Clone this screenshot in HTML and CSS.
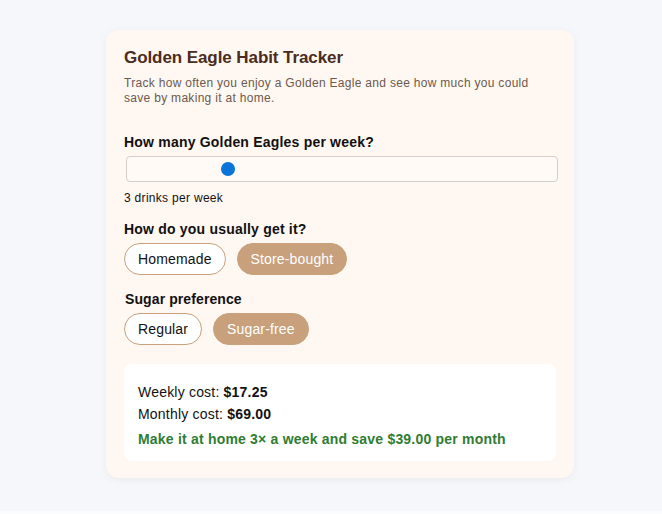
FILE: index.html
```html
<!DOCTYPE html>
<html lang="en">
<head>
<meta charset="utf-8">
<title>Golden Eagle Habit Tracker</title>
<link rel="stylesheet" href="styles.css">
</head>
<body>
<main class="card">
  <h2 class="title">Golden Eagle Habit Tracker</h2>
  <p class="subtitle">Track how often you enjoy a Golden Eagle and see how much you could save by making it at home.</p>

  <section class="field">
    <label class="label" for="freq">How many Golden Eagles per week?</label>
    <input id="freq" class="slider" type="range" min="1" max="10" value="3">
    <div class="hint">3 drinks per week</div>
  </section>

  <section class="field">
    <div class="label">How do you usually get it?</div>
    <div class="options">
      <button class="pill">Homemade</button>
      <button class="pill active">Store-bought</button>
    </div>
  </section>

  <section class="field sugar">
    <div class="label small">Sugar preference</div>
    <div class="options">
      <button class="pill">Regular</button>
      <button class="pill active">Sugar-free</button>
    </div>
  </section>

  <section class="results">
    <p class="line">Weekly cost: <strong>$17.25</strong></p>
    <p class="line">Monthly cost: <strong>$69.00</strong></p>
    <p class="saving">Make it at home 3× a week and save $39.00 per month</p>
  </section>
</main>
</body>
</html>
```

FILE: styles.css
```css
html {
  background: #fbfcfd;
}
body {
  margin: 0;
  padding: 30px 0 33px 106px;
  background: #f5f7fa;
  font-family: "Liberation Sans", Arial, sans-serif;
  letter-spacing: 0.2px;
  color: #111;
}
.card {
  width: 432px;
  padding: 18px 18px 17px 18px;
  background: #fff7f1;
  border-radius: 12px;
  box-shadow: 0 2px 8px rgba(0, 0, 0, 0.05);
}
.title {
  margin: 0;
  font-size: 17px;
  line-height: 20px;
  font-weight: bold;
  letter-spacing: -0.08px;
  color: #4a2c20;
}
.subtitle {
  max-width: 420px;
  margin: 8px 0 0;
  font-size: 12px;
  line-height: 15px;
  letter-spacing: 0.3px;
  color: #6b5a50;
}
.field {
  margin-top: 16px;
}
.field:first-of-type {
  margin-top: 28px;
}
.field.sugar {
  margin-top: 17px;
}
.label {
  display: block;
  font-size: 14px;
  line-height: 16px;
  font-weight: bold;
  color: #111;
  margin-bottom: 6px;
}
.label.small {
  letter-spacing: 0.1px;
  line-height: 15px;
  margin-left: 1px;
  margin-bottom: 6px;
}
.slider {
  -webkit-appearance: none;
  appearance: none;
  display: block;
  box-sizing: border-box;
  width: 432px;
  height: 26px;
  margin: 2px 0 2px 2px;
  padding: 0 2px;
  background: #fffaf6;
  border: 1px solid #d3cfcc;
  border-radius: 4px;
}
.slider::-webkit-slider-runnable-track {
  height: 14px;
  background: transparent;
}
.slider::-webkit-slider-thumb {
  -webkit-appearance: none;
  appearance: none;
  width: 14px;
  height: 14px;
  border-radius: 50%;
  background: #0a74d8;
  border: none;
}
.hint {
  margin-top: 9px;
  font-size: 12px;
  line-height: 14px;
  letter-spacing: 0.3px;
  color: #111;
}
.options {
  display: flex;
  gap: 11px;
}
.pill {
  font-family: "Liberation Sans", Arial, sans-serif;
  font-size: 14px;
  line-height: 16px;
  letter-spacing: 0.15px;
  padding: 7px 13px;
  border-radius: 16px;
  border: 1px solid #c9a27c;
  background: #ffffff;
  color: #111;
}
.pill.active {
  background: #c8a07c;
  color: #ffffff;
}
.results {
  margin-top: 19px;
  padding: 14px;
  background: #ffffff;
  border-radius: 8px;
}
.line {
  margin: 6px 0;
  font-size: 14px;
  line-height: 16px;
  color: #111;
}
.saving {
  margin: 9px 0 0;
  font-size: 14px;
  line-height: 16px;
  font-weight: bold;
  color: #2e7d32;
}
```
